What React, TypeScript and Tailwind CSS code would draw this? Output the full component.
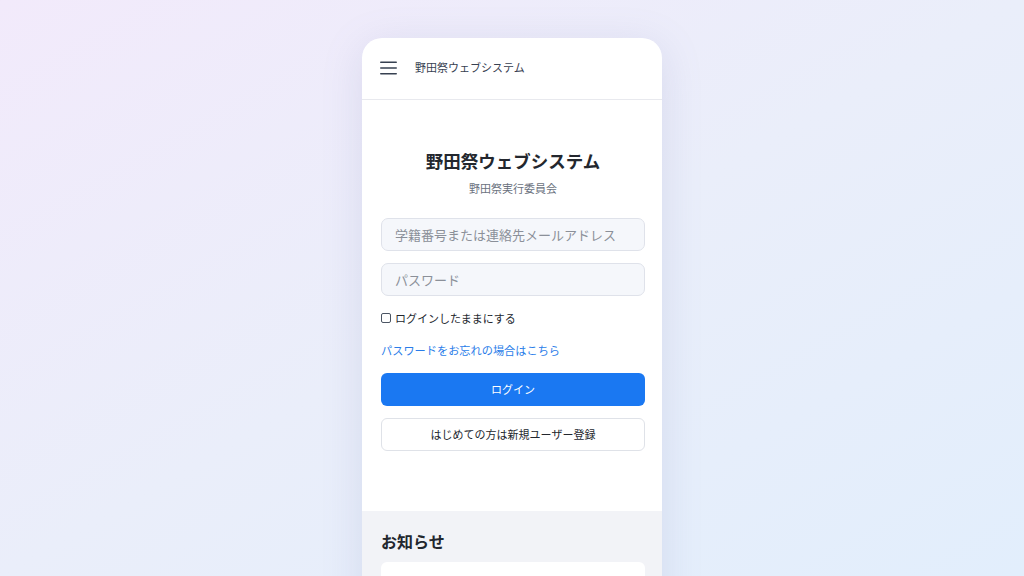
import { useState } from "react";

function MenuIcon() {
  return (
    <svg width="17" height="14" viewBox="0 0 17 14" fill="none">
      <rect x="0" y="0.5" width="17" height="1.6" rx="0.8" fill="#374151" />
      <rect x="0" y="6.2" width="17" height="1.6" rx="0.8" fill="#374151" />
      <rect x="0" y="11.9" width="17" height="1.6" rx="0.8" fill="#374151" />
    </svg>
  );
}

export default function App() {
  const [keep, setKeep] = useState(false);

  return (
    <div
      className="h-[576px] w-full overflow-hidden bg-gradient-to-br from-[#f2eafb] via-[#eaeefa] to-[#e2eefc] flex justify-center pt-[38px]"
      style={{ fontFamily: '"Noto Sans CJK JP", "Noto Sans", sans-serif' }}
    >
      <div className="w-[300px] shrink-0 self-start bg-white rounded-t-[20px] shadow-[0_8px_40px_rgba(120,130,180,0.18)] flex flex-col overflow-hidden">
        {/* header */}
        <header className="h-[62px] shrink-0 pb-[2px] flex items-center gap-[18px] px-[18px] border-b border-[#e8e9ee]">
          <button className="flex items-center">
            <MenuIcon />
          </button>
          <span className="text-[11px] text-[#374151]">野田祭ウェブシステム</span>
        </header>

        {/* login */}
        <section className="shrink-0 pl-[19px] pr-[17px] pt-[47px] pb-[60px] flex flex-col">
          <h1 className="text-center text-[17.5px] leading-[28px] font-bold text-[#23272e]">
            野田祭ウェブシステム
          </h1>
          <p className="mt-[5px] text-center text-[11px] leading-[16px] text-[#6b7280]">
            野田祭実行委員会
          </p>

          <input
            type="text"
            placeholder="学籍番号または連絡先メールアドレス"
            className="mt-[22px] h-[33px] w-full rounded-[7px] border border-[#dfe2ea] bg-[#f5f7fb] px-[13px] text-[13px] text-[#374151] placeholder:text-[#8b9099] outline-none"
          />
          <input
            type="password"
            placeholder="パスワード"
            className="mt-[12px] h-[33px] w-full rounded-[7px] border border-[#dfe2ea] bg-[#f5f7fb] px-[13px] text-[13px] text-[#374151] placeholder:text-[#8b9099] outline-none"
          />

          <label className="mt-[14px] flex items-center gap-[4px] text-[11px] leading-[16px] text-[#23272e]">
            <span
              onClick={() => setKeep(!keep)}
              className={
                keep
                  ? "h-[10px] w-[10px] rounded-[2px] border border-[#1a78f2] bg-[#1a78f2]"
                  : "h-[10px] w-[10px] rounded-[2px] border border-[#4b5563] bg-white"
              }
            />
            ログインしたままにする
          </label>

          <a href="#" className="mt-[16px] text-[11.2px] leading-[16px] text-[#2b7de9]">
            パスワードをお忘れの場合はこちら
          </a>

          <button className="mt-[15px] h-[33px] w-full rounded-[6px] bg-[#1a78f2] text-[11px] text-white">
            ログイン
          </button>
          <button className="mt-[12px] h-[33px] w-full rounded-[6px] border border-[#dfe2e8] bg-white text-[11px] text-[#23272e]">
            はじめての方は新規ユーザー登録
          </button>
        </section>

        {/* news */}
        <section className="shrink-0 bg-[#f2f3f7] pl-[19px] pr-[17px] pt-[18px] pb-[20px]">
          <h2 className="text-[16px] leading-[24px] font-bold text-[#23272e]">お知らせ</h2>
          <div className="mt-[9px] h-[80px] rounded-[6px] bg-white" />
        </section>
      </div>
    </div>
  );
}
